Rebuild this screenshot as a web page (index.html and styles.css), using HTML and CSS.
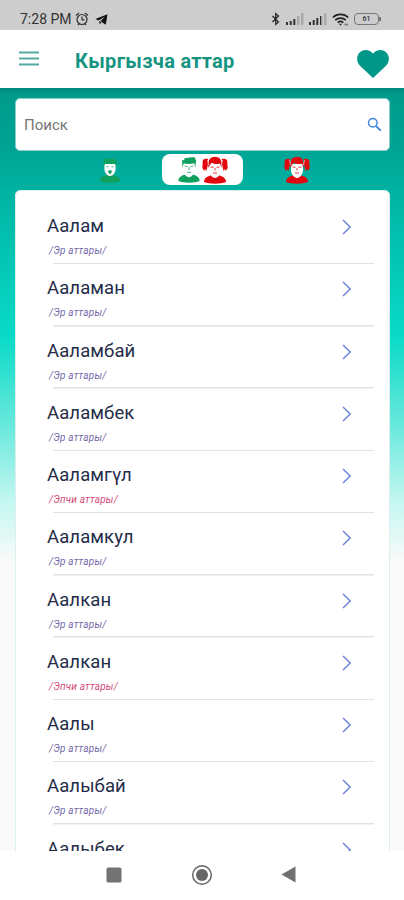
FILE: index.html
```html
<!DOCTYPE html>
<html lang="ky">
<head>
<meta charset="utf-8">
<title>Кыргызча аттар</title>
<link rel="stylesheet" href="styles.css">
</head>
<body>
<svg class="defs" width="0" height="0">
  <symbol id="chev" viewBox="0 0 10 16"><path d="M1 1l7.2 7L1 15" fill="none" stroke="currentColor" stroke-width="1.4"/></symbol>
  <symbol id="boy" viewBox="0 0 24 28">
    <path d="M1 26c0-4 3-5.500 8-7h6c5 1.500 8 3 8 7-5 2.300-17 2.300-22 0z" fill="currentColor"/>
    <path d="M6 8h12v6c0 4-3 8-6 8s-6-4-6-8z" fill="#fff"/>
    <path d="M5 12V4l2 .3L7.500 2c4 .6 7-1 11-.5L18 3l1.500 1-1 8-1-4.500c-4 1-7 .8-11 .2z" fill="currentColor"/>
    <path d="M7.500 10.500l3 .4M13.500 10.900l3-.4M12 11.500v3M10 17h4" stroke="currentColor" stroke-width=".8" fill="none"/>
  </symbol>
  <symbol id="man" viewBox="0 0 24 28">
    <path d="M1 26c0-4 3-5.500 8-7h6c5 1.500 8 3 8 7-5 2.300-17 2.300-22 0z" fill="currentColor"/>
    <path d="M6 7h12v6c0 4-3 7.500-6 7.500S6 17 6 13z" fill="#fff"/>
    <path d="M5 11V4c1-2 3-2 5-2 4-.5 8-.5 9 2v7l-1.500-3.500h-11z" fill="currentColor"/>
    <path d="M8 10.500h2.500M13.500 10.500h2.500" stroke="currentColor" stroke-width=".8"/>
    <path d="M10 15.500c0-1.800 4-1.800 4 0l-1 2.500h-2z" fill="currentColor"/>
  </symbol>
  <symbol id="girl" viewBox="0 0 26 28">
    <path d="M2 26c0-4 3-5.500 8-7h6c5 1.500 8 3 8 7-5 2.300-17 2.300-22 0z" fill="currentColor"/>
    <path d="M7 8h12v6c0 4-3 8-6 8s-6-4-6-8z" fill="#fff"/>
    <path d="M6.500 12C5.500 4 8 .8 13 .8S20.500 4 19.500 12L18 7.500c-4 1.200-6 .5-8-.7l-2 2zM6 3C2 2 0 4 .7 7.500L.3 12l2 3 .7-2 1.500 2L6 8zM20 3c4-1 6 1 5.300 4.500l.4 4.500-2 3-.7-2-1.500 2L20 8z" fill="currentColor"/>
    <path d="M5.500 4l1 5M20.500 4l-1 5" stroke="#fff" stroke-width=".6"/>
    <path d="M8.500 11l3 .3M14.500 11.300l3-.3M13 12v2.500M11 17h4" stroke="currentColor" stroke-width=".8" fill="none"/>
  </symbol>
</svg>
<div class="status">
  <span class="time">7:28 PM</span>
  <svg class="alarm" width="14" height="14" viewBox="0 0 14 14" fill="none" stroke="#303030"><circle cx="7" cy="7.500" r="5" stroke-width="1.200"/><path d="M7 4.500v3.300h2.500M1 3.500L4 1M10 1l3 2.500M3 13l1-1M11 13l-1-1" stroke-width="1.200"/></svg>
  <svg class="plane" width="13" height="11" viewBox="0 0 13 11" fill="#111"><path d="M12.500.2L.3 5l3.500 1.500L10 2.500 5.500 7.300l5.300 3.500zM4.200 7l.4 3.300L6.500 8.500z"/></svg>
  <span class="fill"></span>
  <svg width="10" height="14" viewBox="0 0 10 14" fill="none" stroke="#222" stroke-width="1.200"><path d="M1.500 4l6 6L4.700 12.500v-11L7.500 4l-6 6"/></svg>
  <svg class="signal" width="19" height="12" viewBox="0 0 19 12"><path d="M1 9h2v3H1zM4.700 8h2v4h-2zM8.300 6h2v6h-2z" fill="#333"/><path d="M12 3h2.500v9H12zM16 0h2.500v12H16z" fill="#aaa"/></svg>
  <svg class="signal second" width="19" height="12" viewBox="0 0 19 12"><path d="M1 9h2v3H1zM4.700 7h2v5h-2zM8.300 5h2v7h-2zM12 3h1.500v9H12z" fill="#333"/><path d="M13.500 3h1v9h-1zM16 0h2.500v12H16z" fill="#aaa"/></svg>
  <svg class="wifi" width="17" height="13" viewBox="0 0 17 13" fill="none" stroke="#222" stroke-width="1.700"><path d="M.8 4.500c4-4.200 11.400-4.200 15.400 0M3.200 7.200c3-2.900 7.600-2.900 10.600 0M5.700 9.600c1.700-1.500 3.900-1.500 5.600 0"/><path d="M7 10.700h3l-1.500 2z" fill="#222" stroke="none"/><path d="M12.500 11.500h3.500" stroke="#777"/></svg>
  <span class="battery">61</span>
</div>
<header class="bar">
  <svg class="burger" width="20" height="15" viewBox="0 0 20 15" stroke="#55aaa0" stroke-width="1.900"><path d="M0 1.500h20M0 7.500h20M0 13.500h20"/></svg>
  <h1>Кыргызча аттар</h1>
  <svg class="heart" width="32" height="28" viewBox="0 0 32 28"><path d="M16 28L3.500 16.200C-1 11.800-.8 5.500 3 2.200c4-3.300 9.800-2.600 13 1.600 3.200-4.200 9-4.900 13-1.600 3.800 3.300 4 9.600-.5 14z" fill="#009788"/></svg>
</header>
<main class="page">
  <div class="search">
    <span>Поиск</span>
    <svg width="15" height="15" viewBox="0 0 15 15" fill="none" stroke="#3f85df"><circle cx="5.800" cy="5.800" r="4.300" stroke-width="1.500"/><path d="M9 9l4.800 4.600" stroke-width="1.800"/></svg>
  </div>
  <div class="tabs">
    <div class="tab"><svg class="green" width="24" height="26"><use href="#man"/></svg></div>
    <div class="tab active"><svg class="green" width="24" height="27"><use href="#boy"/></svg><svg class="red" width="26" height="28"><use href="#girl"/></svg></div>
    <div class="tab"><svg class="red" width="26" height="28"><use href="#girl"/></svg></div>
  </div>
  <ul class="list">
    <li><div><b>Аалам</b><i>/Эр аттары/</i></div><svg class="go"><use href="#chev"/></svg></li>
    <li><div><b>Ааламан</b><i>/Эр аттары/</i></div><svg class="go"><use href="#chev"/></svg></li>
    <li><div><b>Ааламбай</b><i>/Эр аттары/</i></div><svg class="go"><use href="#chev"/></svg></li>
    <li><div><b>Ааламбек</b><i>/Эр аттары/</i></div><svg class="go"><use href="#chev"/></svg></li>
    <li><div><b>Ааламгүл</b><i class="f">/Эпчи аттары/</i></div><svg class="go"><use href="#chev"/></svg></li>
    <li><div><b>Ааламкул</b><i>/Эр аттары/</i></div><svg class="go"><use href="#chev"/></svg></li>
    <li><div><b>Аалкан</b><i>/Эр аттары/</i></div><svg class="go"><use href="#chev"/></svg></li>
    <li><div><b>Аалкан</b><i class="f">/Эпчи аттары/</i></div><svg class="go"><use href="#chev"/></svg></li>
    <li><div><b>Аалы</b><i>/Эр аттары/</i></div><svg class="go"><use href="#chev"/></svg></li>
    <li><div><b>Аалыбай</b><i>/Эр аттары/</i></div><svg class="go"><use href="#chev"/></svg></li>
    <li><div><b>Аалыбек</b></div><svg class="go"><use href="#chev"/></svg></li>
  </ul>
</main>
<nav class="nav">
  <svg width="16" height="16"><rect x=".5" y=".5" width="15" height="15" rx="1.500" fill="#737373"/></svg>
  <svg width="22" height="22" viewBox="0 0 22 22"><circle cx="11" cy="11" r="9.300" fill="none" stroke="#666" stroke-width="1.500"/><circle cx="11" cy="11" r="6" fill="#666"/></svg>
  <svg width="15" height="17" viewBox="0 0 15 17"><path d="M.5 8.500L14.500.5v16z" fill="#707070"/></svg>
</nav>
</body>
</html>
```
FILE: styles.css
```css
* { box-sizing: border-box; }
body {
  margin: 0;
  width: 404px;
  height: 900px;
  overflow: hidden;
  display: flex;
  flex-direction: column;
  background: #fff;
  font-family: Roboto, "Noto Sans", sans-serif;
}
svg { display: block; flex: none; }
.defs { display: none; }
.status {
  flex: none;
  height: 30px;
  display: flex;
  align-items: center;
  padding: 8px 22px 0 20px;
  background: #cdcdcd;
  color: #333;
}
.time { font-size: 14px; letter-spacing: 0; white-space: nowrap; }
.alarm { margin-left: 3px; }
.plane { margin-left: 6px; }
.fill { flex: 1; }
.signal { margin-left: 4px; }
.second { margin-left: 4px; }
.wifi { margin-left: 5px; }
.battery {
  position: relative;
  width: 25px;
  height: 12px;
  margin: 0 3px 0 5px;
  border: 1.5px solid #777;
  border-radius: 4px;
  font-size: 7px;
  font-weight: 500;
  line-height: 10px;
  text-align: center;
}
.battery::after {
  content: "";
  position: absolute;
  right: -3px;
  top: 3px;
  width: 2px;
  height: 4px;
  background: #777;
}
.bar {
  flex: none;
  height: 58px;
  display: flex;
  align-items: center;
  padding: 0 15px 0 19px;
}
.burger { margin-bottom: 1px; }
.bar h1 {
  flex: 1;
  margin: 3px 0 0 36px;
  font-size: 20px;
  font-weight: 700;
  letter-spacing: 0.3px;
  line-height: 24px;
  color: #159482;
}
.heart { margin-top: 10px; }
.page {
  flex: none;
  height: 763px;
  overflow: hidden;
  padding: 10px 14px 0 15px;
  background: linear-gradient(#00897b 0, #009b8c 6px, #00a494 60px, #00b5a4 110px, #08dac7 247px, #6be9dd 340px, #c5f7f1 415px, #fafafa 475px);
}
.search {
  height: 53px;
  display: flex;
  align-items: center;
  justify-content: space-between;
  padding: 0 7px 0 8px;
  border: 1px solid #8bd0c8;
  border-radius: 5px;
  background: #fff;
  color: #757575;
  font-size: 15px;
}
.tabs {
  height: 39px;
  display: flex;
  padding: 3px 0 0 54px;
}
.tab {
  width: 81px;
  height: 31px;
  display: flex;
  align-items: center;
  justify-content: center;
}
.tab:first-child { margin-right: 12px; }
.tab:last-child { margin-left: 13px; }
.tab.active { border-radius: 8px; background: #fff; }
.tab.active .green { margin-right: 1px; }
.green { color: #10a060; }
.red { color: #e10810; }
.list {
  height: 681px;
  margin: 0;
  padding: 11px 15px 0 31px;
  list-style: none;
  border: 1px solid #dcefed;
  border-radius: 5px;
  background: #fff;
}
.list li {
  height: 62.25px;
  display: flex;
  justify-content: space-between;
  padding: 12px 22px 0 0;
  background: linear-gradient(#e2e2e2, #e2e2e2) 6px 100% / 100% 1.5px no-repeat;
}
.list b {
  display: block;
  font-size: 18.5px;
  font-weight: 400;
  line-height: 24px;
  letter-spacing: 0.1px;
  color: #242c48;
}
.list i {
  display: block;
  margin: 6px 0 0 2px;
  font-size: 10px;
  line-height: 13px;
  letter-spacing: 0.2px;
  color: #7468a8;
}
.list i.f { color: #d44c78; }
.go { width: 10px; height: 16px; margin-top: 5px; color: #6480d8; }
.nav {
  flex: none;
  height: 49px;
  display: flex;
  align-items: center;
  padding: 0 108px 2px 106px;
  justify-content: space-between;
}
```
